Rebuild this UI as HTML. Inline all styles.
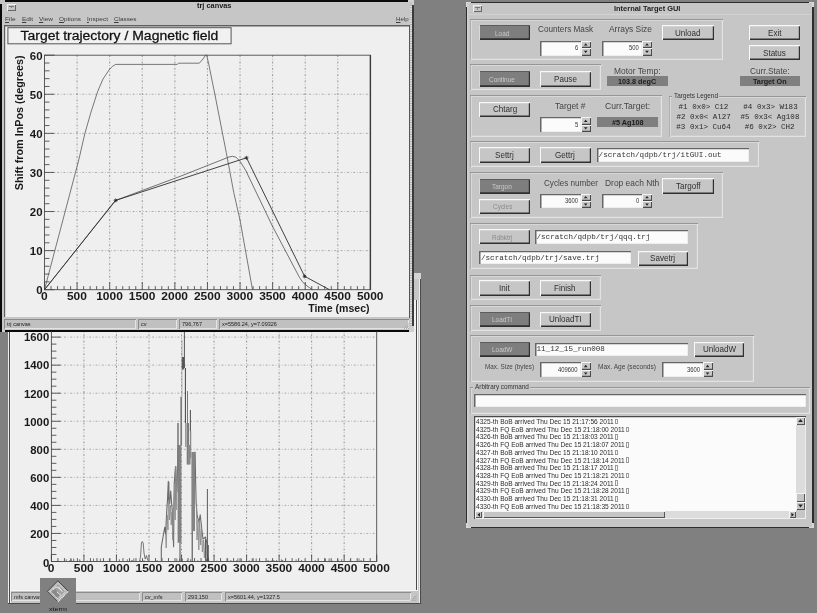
<!DOCTYPE html>
<html><head><meta charset="utf-8"><title>desktop</title>
<style>
html,body{margin:0;padding:0;background:#808080;}
#root{position:relative;width:817px;height:613px;overflow:hidden;background:#808080;font-family:"Liberation Sans",sans-serif;}
#wrap{left:-12px;top:-12px;width:841px;height:637px;background:#808080;filter:grayscale(1) blur(0.4px);}
#in{left:12px;top:12px;width:817px;height:613px;}
#root div,#root span,#root svg{position:absolute;}
#root span{white-space:nowrap;transform-origin:0 50%;line-height:1;}
#root svg{overflow:visible;pointer-events:none;}
u{text-decoration:underline;text-decoration-thickness:0.6px;text-underline-offset:0.5px;}
</style></head><body>
<div id="root"><div id="wrap"><div id="in">
<div style="left:7.50px;top:273.00px;width:413.50px;height:331.30px;background:#4a4a4a;"></div>
<div style="left:7.50px;top:273.00px;width:412.00px;height:330.00px;background:#eeeeee;"></div>
<div style="left:8.60px;top:274.00px;width:410.90px;height:329.00px;background:#c6c6c6;"></div>
<div style="left:8.90px;top:332.00px;width:1.10px;height:271.00px;background:#4a4a4a;"></div>
<div style="left:10.00px;top:332.00px;width:1.40px;height:271.00px;background:#f4f4f4;"></div>
<div style="left:414.20px;top:273.00px;width:6.80px;height:6.00px;background:#d4d4d4;"></div>
<div style="left:11.20px;top:300.00px;width:404.60px;height:289.80px;background:#efefef;"></div>
<div style="left:415.80px;top:300.00px;width:0.90px;height:290.50px;background:#4a4a4a;"></div>
<div style="left:416.70px;top:300.00px;width:1.50px;height:291.00px;background:#f6f6f6;"></div>
<div style="left:11.20px;top:589.80px;width:405.50px;height:0.80px;background:#f6f6f6;"></div>
<div style="left:11.30px;top:592.00px;width:128.50px;height:9.20px;background:#c0c0c0;box-shadow:inset 1px 1px 0 #8c8c8c, inset -1px -1px 0 #e4e4e4;"></div>
<span style="left:14.30px;top:593.97px;font:normal 6px/1 'Liberation Sans',sans-serif;color:#222;transform:scaleX(0.920);">mfs canvas</span>
<div style="left:142.40px;top:592.00px;width:40.10px;height:9.20px;background:#c0c0c0;box-shadow:inset 1px 1px 0 #8c8c8c, inset -1px -1px 0 #e4e4e4;"></div>
<span style="left:145.40px;top:593.97px;font:normal 6px/1 'Liberation Sans',sans-serif;color:#222;transform:scaleX(0.920);">cv_mfs</span>
<div style="left:185.00px;top:592.00px;width:37.00px;height:9.20px;background:#c0c0c0;box-shadow:inset 1px 1px 0 #8c8c8c, inset -1px -1px 0 #e4e4e4;"></div>
<span style="left:188.00px;top:593.97px;font:normal 6px/1 'Liberation Sans',sans-serif;color:#222;transform:scaleX(0.920);">293,150</span>
<div style="left:224.70px;top:592.00px;width:186.30px;height:9.20px;background:#c0c0c0;box-shadow:inset 1px 1px 0 #8c8c8c, inset -1px -1px 0 #e4e4e4;"></div>
<span style="left:227.70px;top:593.97px;font:normal 6px/1 'Liberation Sans',sans-serif;color:#222;transform:scaleX(0.920);">x=5601.44, y=1327.5</span>
<div style="left:-6.00px;top:-6.00px;width:420.20px;height:338.00px;background:#0a0a0a;"></div>
<div style="left:-6.00px;top:-6.00px;width:10.50px;height:10.20px;background:#c2c2c2;"></div>
<div style="left:408.20px;top:-6.00px;width:6.00px;height:11.00px;background:#d0d0d0;"></div>
<div style="left:2.40px;top:2.10px;width:409.90px;height:328.10px;background:#c6c6c6;"></div>
<div style="left:408.80px;top:25.00px;width:1.20px;height:293.00px;background:#555;"></div>
<div style="left:412.30px;top:5.00px;width:1.90px;height:321.00px;background:#3a3a3a;"></div>
<div style="left:408.60px;top:325.80px;width:5.60px;height:6.20px;background:#d0d0d0;"></div>
<div style="left:2.40px;top:330.20px;width:2.60px;height:1.80px;background:#d0d0d0;"></div>
<div style="left:410.40px;top:5.00px;width:1.90px;height:320.80px;background:#dcdcdc;background-image:linear-gradient(#aaa 50%, transparent 50%);background-size:2px 2.4px;"></div>
<span style="left:196.70px;top:3.08px;font:bold 6.6px/1 'Liberation Sans',sans-serif;color:#1a1a1a;transform:scaleX(1.119);">trj canvas</span>
<div style="left:7.00px;top:3.80px;width:8.60px;height:6.90px;background:#c6c6c6;box-shadow:inset 1px 1px 0 #f0f0f0, inset -1px -1px 0 #666;"></div>
<div style="left:9.00px;top:5.50px;width:4.60px;height:1.00px;background:#777;"></div>
<div style="left:10.80px;top:6.50px;width:0.90px;height:1.70px;background:#888;"></div>
<span style="left:5.00px;top:15.87px;font:normal 6.0px/1 'Liberation Sans',sans-serif;color:#3c3c3c;transform:scaleX(1.086);"><u>F</u>ile</span>
<span style="left:21.50px;top:15.87px;font:normal 6.0px/1 'Liberation Sans',sans-serif;color:#3c3c3c;transform:scaleX(1.064);"><u>E</u>dit</span>
<span style="left:39.00px;top:15.87px;font:normal 6.0px/1 'Liberation Sans',sans-serif;color:#3c3c3c;transform:scaleX(1.086);"><u>V</u>iew</span>
<span style="left:59.00px;top:15.87px;font:normal 6.0px/1 'Liberation Sans',sans-serif;color:#3c3c3c;transform:scaleX(1.064);"><u>O</u>ptions</span>
<span style="left:86.50px;top:15.87px;font:normal 6.0px/1 'Liberation Sans',sans-serif;color:#3c3c3c;transform:scaleX(1.086);"><u>I</u>nspect</span>
<span style="left:113.50px;top:15.87px;font:normal 6.0px/1 'Liberation Sans',sans-serif;color:#3c3c3c;transform:scaleX(1.054);"><u>C</u>lasses</span>
<span style="left:396.00px;top:15.87px;font:normal 6.0px/1 'Liberation Sans',sans-serif;color:#3c3c3c;transform:scaleX(1.029);"><u>H</u>elp</span>
<div style="left:3.60px;top:24.80px;width:405.20px;height:292.40px;background:#efefef;box-shadow:inset 1.2px 1.4px 0 #606060;"></div>
<div style="left:4.00px;top:319.30px;width:131.90px;height:9.40px;background:#c0c0c0;box-shadow:inset 1px 1px 0 #8c8c8c, inset -1px -1px 0 #e4e4e4;"></div>
<span style="left:7.00px;top:321.37px;font:normal 6px/1 'Liberation Sans',sans-serif;color:#222;transform:scaleX(0.920);">trj canvas</span>
<div style="left:138.00px;top:319.30px;width:39.00px;height:9.40px;background:#c0c0c0;box-shadow:inset 1px 1px 0 #8c8c8c, inset -1px -1px 0 #e4e4e4;"></div>
<span style="left:141.00px;top:321.37px;font:normal 6px/1 'Liberation Sans',sans-serif;color:#222;transform:scaleX(0.920);">cv</span>
<div style="left:178.80px;top:319.30px;width:37.90px;height:9.40px;background:#c0c0c0;box-shadow:inset 1px 1px 0 #8c8c8c, inset -1px -1px 0 #e4e4e4;"></div>
<span style="left:181.80px;top:321.37px;font:normal 6px/1 'Liberation Sans',sans-serif;color:#222;transform:scaleX(0.920);">796,767</span>
<div style="left:218.90px;top:319.30px;width:190.60px;height:9.40px;background:#c0c0c0;box-shadow:inset 1px 1px 0 #8c8c8c, inset -1px -1px 0 #e4e4e4;"></div>
<span style="left:221.90px;top:321.37px;font:normal 6px/1 'Liberation Sans',sans-serif;color:#222;transform:scaleX(0.920);">x=5586.24, y=7.09326</span>
<svg style="left:0;top:0" width="817" height="613"><path d="M404,329 L409.5,323.5 M406,329 L409.5,325.5 M408,329 L409.5,327.5" stroke="#777" stroke-width="0.7" stroke-dasharray="1 0.8"/><path d="M405,329 L409.5,324.5 M407,329 L409.5,326.5" stroke="#eee" stroke-width="0.7" stroke-dasharray="1 0.8"/><path d="M411,600.6 L416.5,595.1 M413,600.6 L416.5,597.1 M415,600.6 L416.5,599.1" stroke="#777" stroke-width="0.7" stroke-dasharray="1 0.8"/></svg>
<svg style="left:0;top:0" width="817" height="613" viewBox="0 0 817 613">
<rect x="7.9" y="27.7" width="223.2" height="16.1" fill="#f1f1f1" stroke="#555" stroke-width="1"/>
<text stroke="#111" stroke-width="0.25" transform="translate(20.50,39.60) scale(1.164,1)" text-anchor="start" font-family="Liberation Sans, sans-serif" font-weight="normal" font-size="12" fill="#111">Target trajectory / Magnetic field</text>
<path d="M77.09,55.2 V289.7" stroke="#696969" stroke-width="0.65" stroke-dasharray="2 1.8 0.7 1.8" fill="none"/>
<path d="M109.68,55.2 V289.7" stroke="#696969" stroke-width="0.65" stroke-dasharray="2 1.8 0.7 1.8" fill="none"/>
<path d="M142.27,55.2 V289.7" stroke="#696969" stroke-width="0.65" stroke-dasharray="2 1.8 0.7 1.8" fill="none"/>
<path d="M174.86,55.2 V289.7" stroke="#696969" stroke-width="0.65" stroke-dasharray="2 1.8 0.7 1.8" fill="none"/>
<path d="M207.45,55.2 V289.7" stroke="#696969" stroke-width="0.65" stroke-dasharray="2 1.8 0.7 1.8" fill="none"/>
<path d="M240.04,55.2 V289.7" stroke="#696969" stroke-width="0.65" stroke-dasharray="2 1.8 0.7 1.8" fill="none"/>
<path d="M272.63,55.2 V289.7" stroke="#696969" stroke-width="0.65" stroke-dasharray="2 1.8 0.7 1.8" fill="none"/>
<path d="M305.22,55.2 V289.7" stroke="#696969" stroke-width="0.65" stroke-dasharray="2 1.8 0.7 1.8" fill="none"/>
<path d="M337.81,55.2 V289.7" stroke="#696969" stroke-width="0.65" stroke-dasharray="2 1.8 0.7 1.8" fill="none"/>
<path d="M44.5,250.62 H370.4" stroke="#7d7d7d" stroke-width="0.6" stroke-dasharray="2 1.8 0.7 1.8" fill="none"/>
<path d="M44.5,211.53 H370.4" stroke="#7d7d7d" stroke-width="0.6" stroke-dasharray="2 1.8 0.7 1.8" fill="none"/>
<path d="M44.5,172.45 H370.4" stroke="#7d7d7d" stroke-width="0.6" stroke-dasharray="2 1.8 0.7 1.8" fill="none"/>
<path d="M44.5,133.37 H370.4" stroke="#7d7d7d" stroke-width="0.6" stroke-dasharray="2 1.8 0.7 1.8" fill="none"/>
<path d="M44.5,94.28 H370.4" stroke="#7d7d7d" stroke-width="0.6" stroke-dasharray="2 1.8 0.7 1.8" fill="none"/>
<rect x="44.5" y="55.2" width="325.9" height="234.5" stroke="#4c4c4c" stroke-width="0.9" fill="none"/>
<path d="M370.4,55.2 V289.7" stroke="#3c3c3c" stroke-width="1.4"/>
<path d="M44.50,289.7 v-7.5 M51.02,289.7 v-3.6 M57.54,289.7 v-3.6 M64.05,289.7 v-3.6 M70.57,289.7 v-3.6 M77.09,289.7 v-7.5 M83.61,289.7 v-3.6 M90.13,289.7 v-3.6 M96.64,289.7 v-3.6 M103.16,289.7 v-3.6 M109.68,289.7 v-7.5 M116.20,289.7 v-3.6 M122.72,289.7 v-3.6 M129.23,289.7 v-3.6 M135.75,289.7 v-3.6 M142.27,289.7 v-7.5 M148.79,289.7 v-3.6 M155.31,289.7 v-3.6 M161.82,289.7 v-3.6 M168.34,289.7 v-3.6 M174.86,289.7 v-7.5 M181.38,289.7 v-3.6 M187.90,289.7 v-3.6 M194.41,289.7 v-3.6 M200.93,289.7 v-3.6 M207.45,289.7 v-7.5 M213.97,289.7 v-3.6 M220.49,289.7 v-3.6 M227.00,289.7 v-3.6 M233.52,289.7 v-3.6 M240.04,289.7 v-7.5 M246.56,289.7 v-3.6 M253.08,289.7 v-3.6 M259.59,289.7 v-3.6 M266.11,289.7 v-3.6 M272.63,289.7 v-7.5 M279.15,289.7 v-3.6 M285.67,289.7 v-3.6 M292.18,289.7 v-3.6 M298.70,289.7 v-3.6 M305.22,289.7 v-7.5 M311.74,289.7 v-3.6 M318.26,289.7 v-3.6 M324.77,289.7 v-3.6 M331.29,289.7 v-3.6 M337.81,289.7 v-7.5 M344.33,289.7 v-3.6 M350.85,289.7 v-3.6 M357.36,289.7 v-3.6 M363.88,289.7 v-3.6 M370.40,289.7 v-7.5" stroke="#444" stroke-width="0.85"/>
<path d="M44.5,289.70 h10 M44.5,281.88 h5 M44.5,274.07 h5 M44.5,266.25 h5 M44.5,258.43 h5 M44.5,250.62 h10 M44.5,242.80 h5 M44.5,234.98 h5 M44.5,227.17 h5 M44.5,219.35 h5 M44.5,211.53 h10 M44.5,203.72 h5 M44.5,195.90 h5 M44.5,188.08 h5 M44.5,180.27 h5 M44.5,172.45 h10 M44.5,164.63 h5 M44.5,156.82 h5 M44.5,149.00 h5 M44.5,141.18 h5 M44.5,133.37 h10 M44.5,125.55 h5 M44.5,117.73 h5 M44.5,109.92 h5 M44.5,102.10 h5 M44.5,94.28 h10 M44.5,86.47 h5 M44.5,78.65 h5 M44.5,70.83 h5 M44.5,63.02 h5 M44.5,55.20 h10" stroke="#444" stroke-width="0.85"/>
<text transform="translate(44.30,299.70) scale(1.130,1)" text-anchor="middle" font-family="Liberation Sans, sans-serif" font-weight="bold" font-size="10.6" fill="#1a1a1a">0</text>
<text transform="translate(76.89,299.70) scale(1.130,1)" text-anchor="middle" font-family="Liberation Sans, sans-serif" font-weight="bold" font-size="10.6" fill="#1a1a1a">500</text>
<text transform="translate(109.48,299.70) scale(1.130,1)" text-anchor="middle" font-family="Liberation Sans, sans-serif" font-weight="bold" font-size="10.6" fill="#1a1a1a">1000</text>
<text transform="translate(142.07,299.70) scale(1.130,1)" text-anchor="middle" font-family="Liberation Sans, sans-serif" font-weight="bold" font-size="10.6" fill="#1a1a1a">1500</text>
<text transform="translate(174.66,299.70) scale(1.130,1)" text-anchor="middle" font-family="Liberation Sans, sans-serif" font-weight="bold" font-size="10.6" fill="#1a1a1a">2000</text>
<text transform="translate(207.25,299.70) scale(1.130,1)" text-anchor="middle" font-family="Liberation Sans, sans-serif" font-weight="bold" font-size="10.6" fill="#1a1a1a">2500</text>
<text transform="translate(239.84,299.70) scale(1.130,1)" text-anchor="middle" font-family="Liberation Sans, sans-serif" font-weight="bold" font-size="10.6" fill="#1a1a1a">3000</text>
<text transform="translate(272.43,299.70) scale(1.130,1)" text-anchor="middle" font-family="Liberation Sans, sans-serif" font-weight="bold" font-size="10.6" fill="#1a1a1a">3500</text>
<text transform="translate(305.02,299.70) scale(1.130,1)" text-anchor="middle" font-family="Liberation Sans, sans-serif" font-weight="bold" font-size="10.6" fill="#1a1a1a">4000</text>
<text transform="translate(337.61,299.70) scale(1.130,1)" text-anchor="middle" font-family="Liberation Sans, sans-serif" font-weight="bold" font-size="10.6" fill="#1a1a1a">4500</text>
<text transform="translate(370.20,299.70) scale(1.130,1)" text-anchor="middle" font-family="Liberation Sans, sans-serif" font-weight="bold" font-size="10.6" fill="#1a1a1a">5000</text>
<text transform="translate(42.60,294.00) scale(1.080,1)" text-anchor="end" font-family="Liberation Sans, sans-serif" font-weight="bold" font-size="10.6" fill="#1a1a1a">0</text>
<text transform="translate(42.60,254.92) scale(1.080,1)" text-anchor="end" font-family="Liberation Sans, sans-serif" font-weight="bold" font-size="10.6" fill="#1a1a1a">10</text>
<text transform="translate(42.60,215.83) scale(1.080,1)" text-anchor="end" font-family="Liberation Sans, sans-serif" font-weight="bold" font-size="10.6" fill="#1a1a1a">20</text>
<text transform="translate(42.60,176.75) scale(1.080,1)" text-anchor="end" font-family="Liberation Sans, sans-serif" font-weight="bold" font-size="10.6" fill="#1a1a1a">30</text>
<text transform="translate(42.60,137.67) scale(1.080,1)" text-anchor="end" font-family="Liberation Sans, sans-serif" font-weight="bold" font-size="10.6" fill="#1a1a1a">40</text>
<text transform="translate(42.60,98.58) scale(1.080,1)" text-anchor="end" font-family="Liberation Sans, sans-serif" font-weight="bold" font-size="10.6" fill="#1a1a1a">50</text>
<text transform="translate(42.60,60.20) scale(1.080,1)" text-anchor="end" font-family="Liberation Sans, sans-serif" font-weight="bold" font-size="10.6" fill="#1a1a1a">60</text>
<text transform="translate(369.60,311.80) scale(0.997,1)" text-anchor="end" font-family="Liberation Sans, sans-serif" font-weight="bold" font-size="10.6" fill="#1a1a1a">Time (msec)</text>
<text transform="translate(23.20,55.40) rotate(-90) scale(1.019,1)" text-anchor="end" font-family="Liberation Sans, sans-serif" font-weight="bold" font-size="10.6" fill="#1a1a1a">Shift from InPos (degrees)</text>
<polyline points="44.50,289.70 78.75,160.00 84.80,133.80 91.00,112.00 97.70,91.40 103.00,79.00 109.30,69.60 112.50,66.30 115.70,64.40 177.40,64.40 178.50,63.20 199.30,63.20 203.00,59.00 205.60,55.00 206.60,55.00 208.50,63.00 215.00,95.00 226.25,152.50 233.75,192.50 240.00,220.00 252.50,289.70" stroke="#585858" stroke-width="0.8" fill="none" stroke-linejoin="round"/>
<polyline points="44.50,289.70 112.00,204.60 114.50,201.60 117.00,199.90 180.00,176.40 229.00,157.00 232.50,156.30 236.00,157.20 240.00,161.30 245.50,170.00 272.50,226.30 299.50,277.50 303.00,282.50 307.00,286.00 312.50,289.70" stroke="#484848" stroke-width="0.75" fill="none" stroke-linejoin="round"/>
<polyline points="44.50,289.70 115.70,200.40 246.50,157.80 304.60,276.30 329.50,289.70" stroke="#2e2e2e" stroke-width="0.9" fill="none"/>
<path d="M113.7,200.4 h4 M115.7,198.4 v4 M114.3,199.0 l2.8,2.8 M114.3,201.8 l2.8,-2.8" stroke="#222" stroke-width="0.7"/>
<path d="M244.5,157.8 h4 M246.5,155.8 v4 M245.1,156.4 l2.8,2.8 M245.1,159.20000000000002 l2.8,-2.8" stroke="#222" stroke-width="0.7"/>
<path d="M302.6,276.3 h4 M304.6,274.3 v4 M303.20000000000005,274.90000000000003 l2.8,2.8 M303.20000000000005,277.7 l2.8,-2.8" stroke="#222" stroke-width="0.7"/>
<clipPath id="c2"><rect x="10" y="331.5" width="407" height="260"/></clipPath>
<g clip-path="url(#c2)">
<path d="M83.93,328.0 V561.5" stroke="#696969" stroke-width="0.65" stroke-dasharray="2 1.8 0.7 1.8" fill="none"/>
<path d="M116.46,328.0 V561.5" stroke="#696969" stroke-width="0.65" stroke-dasharray="2 1.8 0.7 1.8" fill="none"/>
<path d="M148.99,328.0 V561.5" stroke="#696969" stroke-width="0.65" stroke-dasharray="2 1.8 0.7 1.8" fill="none"/>
<path d="M181.52,328.0 V561.5" stroke="#696969" stroke-width="0.65" stroke-dasharray="2 1.8 0.7 1.8" fill="none"/>
<path d="M214.05,328.0 V561.5" stroke="#696969" stroke-width="0.65" stroke-dasharray="2 1.8 0.7 1.8" fill="none"/>
<path d="M246.58,328.0 V561.5" stroke="#696969" stroke-width="0.65" stroke-dasharray="2 1.8 0.7 1.8" fill="none"/>
<path d="M279.11,328.0 V561.5" stroke="#696969" stroke-width="0.65" stroke-dasharray="2 1.8 0.7 1.8" fill="none"/>
<path d="M311.64,328.0 V561.5" stroke="#696969" stroke-width="0.65" stroke-dasharray="2 1.8 0.7 1.8" fill="none"/>
<path d="M344.17,328.0 V561.5" stroke="#696969" stroke-width="0.65" stroke-dasharray="2 1.8 0.7 1.8" fill="none"/>
<path d="M51.4,533.45 H376.7" stroke="#7d7d7d" stroke-width="0.6" stroke-dasharray="2 1.8 0.7 1.8" fill="none"/>
<path d="M51.4,505.40 H376.7" stroke="#7d7d7d" stroke-width="0.6" stroke-dasharray="2 1.8 0.7 1.8" fill="none"/>
<path d="M51.4,477.35 H376.7" stroke="#7d7d7d" stroke-width="0.6" stroke-dasharray="2 1.8 0.7 1.8" fill="none"/>
<path d="M51.4,449.30 H376.7" stroke="#7d7d7d" stroke-width="0.6" stroke-dasharray="2 1.8 0.7 1.8" fill="none"/>
<path d="M51.4,421.25 H376.7" stroke="#7d7d7d" stroke-width="0.6" stroke-dasharray="2 1.8 0.7 1.8" fill="none"/>
<path d="M51.4,393.20 H376.7" stroke="#7d7d7d" stroke-width="0.6" stroke-dasharray="2 1.8 0.7 1.8" fill="none"/>
<path d="M51.4,365.15 H376.7" stroke="#7d7d7d" stroke-width="0.6" stroke-dasharray="2 1.8 0.7 1.8" fill="none"/>
<path d="M51.4,337.10 H376.7" stroke="#7d7d7d" stroke-width="0.6" stroke-dasharray="2 1.8 0.7 1.8" fill="none"/>
<rect x="51.4" y="328.0" width="325.3" height="233.5" stroke="#4c4c4c" stroke-width="0.9" fill="none"/>
<path d="M51.40,561.5 v-7 M57.91,561.5 v-3.4 M64.41,561.5 v-3.4 M70.92,561.5 v-3.4 M77.42,561.5 v-3.4 M83.93,561.5 v-7 M90.44,561.5 v-3.4 M96.94,561.5 v-3.4 M103.45,561.5 v-3.4 M109.95,561.5 v-3.4 M116.46,561.5 v-7 M122.97,561.5 v-3.4 M129.47,561.5 v-3.4 M135.98,561.5 v-3.4 M142.48,561.5 v-3.4 M148.99,561.5 v-7 M155.50,561.5 v-3.4 M162.00,561.5 v-3.4 M168.51,561.5 v-3.4 M175.01,561.5 v-3.4 M181.52,561.5 v-7 M188.03,561.5 v-3.4 M194.53,561.5 v-3.4 M201.04,561.5 v-3.4 M207.54,561.5 v-3.4 M214.05,561.5 v-7 M220.56,561.5 v-3.4 M227.06,561.5 v-3.4 M233.57,561.5 v-3.4 M240.07,561.5 v-3.4 M246.58,561.5 v-7 M253.09,561.5 v-3.4 M259.59,561.5 v-3.4 M266.10,561.5 v-3.4 M272.60,561.5 v-3.4 M279.11,561.5 v-7 M285.62,561.5 v-3.4 M292.12,561.5 v-3.4 M298.63,561.5 v-3.4 M305.13,561.5 v-3.4 M311.64,561.5 v-7 M318.15,561.5 v-3.4 M324.65,561.5 v-3.4 M331.16,561.5 v-3.4 M337.66,561.5 v-3.4 M344.17,561.5 v-7 M350.68,561.5 v-3.4 M357.18,561.5 v-3.4 M363.69,561.5 v-3.4 M370.19,561.5 v-3.4 M376.70,561.5 v-7" stroke="#444" stroke-width="0.85"/>
<path d="M51.4,561.50 h9.5 M51.4,554.49 h5 M51.4,547.48 h5 M51.4,540.46 h5 M51.4,533.45 h9.5 M51.4,526.44 h5 M51.4,519.42 h5 M51.4,512.41 h5 M51.4,505.40 h9.5 M51.4,498.39 h5 M51.4,491.38 h5 M51.4,484.36 h5 M51.4,477.35 h9.5 M51.4,470.34 h5 M51.4,463.32 h5 M51.4,456.31 h5 M51.4,449.30 h9.5 M51.4,442.29 h5 M51.4,435.27 h5 M51.4,428.26 h5 M51.4,421.25 h9.5 M51.4,414.24 h5 M51.4,407.23 h5 M51.4,400.21 h5 M51.4,393.20 h9.5 M51.4,386.19 h5 M51.4,379.18 h5 M51.4,372.16 h5 M51.4,365.15 h9.5 M51.4,358.14 h5 M51.4,351.12 h5 M51.4,344.11 h5 M51.4,337.10 h9.5 M51.4,330.09 h5" stroke="#444" stroke-width="0.85"/>
<text transform="translate(51.20,572.30) scale(1.130,1)" text-anchor="middle" font-family="Liberation Sans, sans-serif" font-weight="bold" font-size="10.6" fill="#1a1a1a">0</text>
<text transform="translate(83.73,572.30) scale(1.130,1)" text-anchor="middle" font-family="Liberation Sans, sans-serif" font-weight="bold" font-size="10.6" fill="#1a1a1a">500</text>
<text transform="translate(116.26,572.30) scale(1.130,1)" text-anchor="middle" font-family="Liberation Sans, sans-serif" font-weight="bold" font-size="10.6" fill="#1a1a1a">1000</text>
<text transform="translate(148.79,572.30) scale(1.130,1)" text-anchor="middle" font-family="Liberation Sans, sans-serif" font-weight="bold" font-size="10.6" fill="#1a1a1a">1500</text>
<text transform="translate(181.32,572.30) scale(1.130,1)" text-anchor="middle" font-family="Liberation Sans, sans-serif" font-weight="bold" font-size="10.6" fill="#1a1a1a">2000</text>
<text transform="translate(213.85,572.30) scale(1.130,1)" text-anchor="middle" font-family="Liberation Sans, sans-serif" font-weight="bold" font-size="10.6" fill="#1a1a1a">2500</text>
<text transform="translate(246.38,572.30) scale(1.130,1)" text-anchor="middle" font-family="Liberation Sans, sans-serif" font-weight="bold" font-size="10.6" fill="#1a1a1a">3000</text>
<text transform="translate(278.91,572.30) scale(1.130,1)" text-anchor="middle" font-family="Liberation Sans, sans-serif" font-weight="bold" font-size="10.6" fill="#1a1a1a">3500</text>
<text transform="translate(311.44,572.30) scale(1.130,1)" text-anchor="middle" font-family="Liberation Sans, sans-serif" font-weight="bold" font-size="10.6" fill="#1a1a1a">4000</text>
<text transform="translate(343.97,572.30) scale(1.130,1)" text-anchor="middle" font-family="Liberation Sans, sans-serif" font-weight="bold" font-size="10.6" fill="#1a1a1a">4500</text>
<text transform="translate(376.50,572.30) scale(1.130,1)" text-anchor="middle" font-family="Liberation Sans, sans-serif" font-weight="bold" font-size="10.6" fill="#1a1a1a">5000</text>
<text transform="translate(49.20,566.80) scale(1.070,1)" text-anchor="end" font-family="Liberation Sans, sans-serif" font-weight="bold" font-size="10.6" fill="#1a1a1a">0</text>
<text transform="translate(49.20,537.75) scale(1.070,1)" text-anchor="end" font-family="Liberation Sans, sans-serif" font-weight="bold" font-size="10.6" fill="#1a1a1a">200</text>
<text transform="translate(49.20,509.70) scale(1.070,1)" text-anchor="end" font-family="Liberation Sans, sans-serif" font-weight="bold" font-size="10.6" fill="#1a1a1a">400</text>
<text transform="translate(49.20,481.65) scale(1.070,1)" text-anchor="end" font-family="Liberation Sans, sans-serif" font-weight="bold" font-size="10.6" fill="#1a1a1a">600</text>
<text transform="translate(49.20,453.60) scale(1.070,1)" text-anchor="end" font-family="Liberation Sans, sans-serif" font-weight="bold" font-size="10.6" fill="#1a1a1a">800</text>
<text transform="translate(49.20,425.55) scale(1.070,1)" text-anchor="end" font-family="Liberation Sans, sans-serif" font-weight="bold" font-size="10.6" fill="#1a1a1a">1000</text>
<text transform="translate(49.20,397.50) scale(1.070,1)" text-anchor="end" font-family="Liberation Sans, sans-serif" font-weight="bold" font-size="10.6" fill="#1a1a1a">1200</text>
<text transform="translate(49.20,369.45) scale(1.070,1)" text-anchor="end" font-family="Liberation Sans, sans-serif" font-weight="bold" font-size="10.6" fill="#1a1a1a">1400</text>
<text transform="translate(49.20,341.40) scale(1.070,1)" text-anchor="end" font-family="Liberation Sans, sans-serif" font-weight="bold" font-size="10.6" fill="#1a1a1a">1600</text>
<polyline points="139.50,561.50 140.60,556.00 141.40,543.00 142.30,541.50 143.20,543.00 144.00,553.00 145.20,559.00 146.50,555.50 147.60,560.00 149.00,561.50" stroke="#666" stroke-width="0.9" fill="none"/>
<polyline points="161.30,561.50 161.30,546.80 163.00,537.00 164.80,527.20 165.60,534.00 166.70,511.50 167.50,500.00 168.30,481.20 169.00,500.00 169.70,503.70 170.20,496.00 170.70,491.00 171.50,502.00 172.20,509.60 173.00,530.00 173.60,546.80 173.90,510.00 174.20,484.10 174.90,474.00 175.50,466.50 176.20,480.00 176.90,492.00 177.50,470.00 178.10,445.00" stroke="#6a6a6a" stroke-width="1.1" fill="none" stroke-linejoin="round"/>
<polyline points="165.60,534.00 166.20,548.00 167.20,515.00 168.00,530.00 168.80,482.00 169.40,520.00 170.40,505.00 171.20,525.00 172.00,512.00 172.80,540.00 174.60,490.00 175.20,520.00 176.00,475.00 176.60,510.00" stroke="#8c8c8c" stroke-width="0.9" fill="none" stroke-linejoin="round"/>
<polyline points="195.10,451.80 195.60,480.00 196.10,501.80 197.10,515.00 198.00,519.00 199.00,522.00 200.20,514.80 201.00,522.00 202.00,531.00 203.00,539.00 204.30,538.00 205.50,537.00 206.30,541.00 206.90,543.00 207.20,555.00 208.80,561.50" stroke="#6a6a6a" stroke-width="1.1" fill="none" stroke-linejoin="round"/>
<polyline points="196.40,505.00 197.00,540.00 198.00,520.00 198.80,550.00 199.60,522.00 200.60,545.00 201.40,527.00 202.40,552.00 203.40,540.00 204.40,558.00 205.40,540.00 206.20,561.00" stroke="#8c8c8c" stroke-width="0.9" fill="none" stroke-linejoin="round"/>
<path d="M182.0,339.7 V396.7" stroke="#9a9a9a" stroke-width="0.7"/>
<path d="M183.0,357 V369.5" stroke="#5a5a5a" stroke-width="2.2"/>
<path d="M181.2,396.7 V445" stroke="#7a7a7a" stroke-width="1.7"/>
<path d="M179.5,445 V542.8" stroke="#828282" stroke-width="3.8"/>
<path d="M180.0,542.8 V561.5" stroke="#3a3a3a" stroke-width="0.9"/>
<path d="M178.0,423 V470" stroke="#7c7c7c" stroke-width="1.6"/>
<path d="M175.8,466 V500" stroke="#888" stroke-width="1.4"/>
<path d="M187.5,391 V423" stroke="#5a5a5a" stroke-width="0.8"/>
<path d="M187.9,423 V464.5" stroke="#7c7c7c" stroke-width="2.4"/>
<path d="M189.3,445 V464.6" stroke="#8a8a8a" stroke-width="2.6"/>
<path d="M190.4,410 V431" stroke="#3a3a3a" stroke-width="0.9"/>
<path d="M190.6,431 V458" stroke="#8a8a8a" stroke-width="1.3"/>
<path d="M193.2,452 V531" stroke="#848484" stroke-width="3.6"/>
<path d="M192.2,531 V561.5" stroke="#2e2e2e" stroke-width="0.9"/>
<path d="M207.4,489 V561.5" stroke="#4a4a4a" stroke-width="0.9"/>
<path d="M205.6,539 V561.5" stroke="#444" stroke-width="0.8"/>
<path d="M208.4,545 V561.5" stroke="#444" stroke-width="0.8"/>
<path d="M184.4,331.5 V368" stroke="#2c2c2c" stroke-width="0.8"/>
<path d="M185.4,368 V423" stroke="#2c2c2c" stroke-width="0.9"/>
<path d="M185.8,423 V447" stroke="#666" stroke-width="0.9"/>
<path d="M168.6,482 V500" stroke="#6a6a6a" stroke-width="0.9"/>
<path d="M133.8,561.5 v-3 M100.4,561.5 v-3 M207.0,561.5 v-3 M80.3,561.5 v-0.8 M341.7,561.5 v-2.2 M140.4,561.5 v-1.2 M119.4,561.5 v-2.2 M227.7,561.5 v-3 M207.7,561.5 v-1.2 M131.9,561.5 v-1.2 M329.1,561.5 v-3 M180.9,561.5 v-0.8 M268.1,561.5 v-0.8 M109.4,561.5 v-3 M73.3,561.5 v-0.8 M315.3,561.5 v-1.5 M206.6,561.5 v-2.2 M281.4,561.5 v-2.2 M182.4,561.5 v-3 M197.8,561.5 v-1.2 M332.4,561.5 v-0.8 M71.1,561.5 v-2.2 M127.3,561.5 v-2.2 M301.5,561.5 v-1.5 M190.6,561.5 v-2.2 M237.9,561.5 v-3 M241.4,561.5 v-3 M132.0,561.5 v-1.5 M271.4,561.5 v-0.8 M325.5,561.5 v-3 M268.1,561.5 v-1.2 M276.6,561.5 v-1.5 M359.0,561.5 v-3 M236.4,561.5 v-1.2 M256.2,561.5 v-3 M142.8,561.5 v-0.8 M79.7,561.5 v-2.2 M87.4,561.5 v-0.8 M187.2,561.5 v-1.2 M66.2,561.5 v-2.2 M298.3,561.5 v-0.8 M73.7,561.5 v-3 M296.1,561.5 v-2.2 M282.7,561.5 v-1.5 M230.8,561.5 v-1.5 M216.7,561.5 v-0.8 M156.0,561.5 v-0.8 M93.5,561.5 v-3 M69.7,561.5 v-1.2 M361.1,561.5 v-1.5 M249.2,561.5 v-1.2 M273.8,561.5 v-1.5 M157.3,561.5 v-1.2 M338.0,561.5 v-2.2 M176.8,561.5 v-3 M179.7,561.5 v-3 M271.1,561.5 v-0.8 M252.2,561.5 v-3 M144.1,561.5 v-1.2 M350.3,561.5 v-2.2" stroke="#555" stroke-width="0.8"/>
</g>
</svg>
<div style="left:465.90px;top:1.70px;width:347.90px;height:526.20px;background:#2e2e2e;"></div>
<div style="left:467.40px;top:3.00px;width:344.60px;height:523.80px;background:#c6c6c6;box-shadow:inset 1.5px 0 0 #d4d4d4;"></div>
<div style="left:465.90px;top:1.70px;width:5.00px;height:5.00px;background:#d8d8d8;"></div>
<div style="left:808.60px;top:1.70px;width:5.00px;height:5.00px;background:#d8d8d8;"></div>
<div style="left:465.90px;top:522.90px;width:5.00px;height:5.00px;background:#d8d8d8;"></div>
<div style="left:808.60px;top:522.90px;width:5.00px;height:5.00px;background:#d8d8d8;"></div>
<div style="left:467.40px;top:3.00px;width:344.60px;height:523.80px;background:#c6c6c6;box-shadow:inset 1.5px 0 0 #d2d2d2;"></div>
<div style="left:469.00px;top:14.30px;width:342.00px;height:1.00px;background:#d2d2d2;"></div>
<div style="left:472.90px;top:5.00px;width:8.80px;height:7.10px;background:#c6c6c6;box-shadow:inset 1px 1px 0 #f0f0f0, inset -1px -1px 0 #666;"></div>
<div style="left:475.00px;top:6.70px;width:4.60px;height:0.90px;background:#777;"></div>
<div style="left:476.60px;top:7.60px;width:1.00px;height:2.00px;background:#888;"></div>
<span style="left:613.50px;top:4.89px;font:bold 7.6px/1 'Liberation Sans',sans-serif;color:#1e1e1e;transform:scaleX(0.980);">Internal Target GUI</span>
<div style="left:470.00px;top:18.70px;width:253.00px;height:41.50px;box-shadow:inset 0 1px 0 #969696, inset 1px 0 0 #b0b0b0, inset -1.2px -1.2px 0 #e2e2e2;"></div>
<div style="left:471.00px;top:19.70px;width:253.00px;height:41.50px;box-shadow:inset 1px 1px 0 #d8d8d8;"></div>
<div style="left:479.40px;top:25.30px;width:50.60px;height:15.20px;background:#7e7e7e;box-shadow:inset 1px 0 0 #d8d8d8, inset 0 1px 0 #5c5c5c, inset -1.2px -1.8px 0 #303030;"></div>
<span style="left:495.01px;top:29.69px;font:normal 7.6000000000000005px/1 'Liberation Sans',sans-serif;color:#c9c9c9;transform:scaleX(0.850);">Load</span>
<span style="left:537.50px;top:25.26px;font:normal 9.3px/1 'Liberation Sans',sans-serif;color:#454545;transform:scaleX(0.881);">Counters Mask</span>
<div style="left:540.40px;top:40.70px;width:40.50px;height:14.90px;background:#fbfbfb;box-shadow:inset 1.5px 1.2px 0 #666, inset -1px -1px 0 #eeeeee;"></div>
<span style="left:574.65px;top:44.97px;font:normal 6.5px/1 'Liberation Sans',sans-serif;color:#333;transform:scaleX(0.900);">6</span>
<div style="left:580.90px;top:40.70px;width:9.90px;height:7.45px;background:#c6c6c6;box-shadow:inset 1px 1px 0 #f4f4f4, inset -1px -1.2px 0 #4a4a4a;"></div>
<svg style="left:0;top:0" width="817" height="613"><polygon points="583.9,45.425000000000004 587.4999999999999,45.425000000000004 585.6999999999999,43.12500000000001" fill="#222"/></svg>
<div style="left:580.90px;top:48.15px;width:9.90px;height:7.45px;background:#c6c6c6;box-shadow:inset 1px 1px 0 #f4f4f4, inset -1px -1.2px 0 #4a4a4a;"></div>
<svg style="left:0;top:0" width="817" height="613"><polygon points="583.9,50.675 587.4999999999999,50.675 585.6999999999999,52.975" fill="#222"/></svg>
<span style="left:608.50px;top:25.26px;font:normal 9.3px/1 'Liberation Sans',sans-serif;color:#454545;transform:scaleX(0.904);">Arrays Size</span>
<div style="left:602.00px;top:40.70px;width:40.20px;height:14.90px;background:#fbfbfb;box-shadow:inset 1.5px 1.2px 0 #666, inset -1px -1px 0 #eeeeee;"></div>
<span style="left:629.44px;top:44.97px;font:normal 6.5px/1 'Liberation Sans',sans-serif;color:#333;transform:scaleX(0.900);">500</span>
<div style="left:642.20px;top:40.70px;width:9.90px;height:7.45px;background:#c6c6c6;box-shadow:inset 1px 1px 0 #f4f4f4, inset -1px -1.2px 0 #4a4a4a;"></div>
<svg style="left:0;top:0" width="817" height="613"><polygon points="645.2,45.425000000000004 648.8,45.425000000000004 647.0,43.12500000000001" fill="#222"/></svg>
<div style="left:642.20px;top:48.15px;width:9.90px;height:7.45px;background:#c6c6c6;box-shadow:inset 1px 1px 0 #f4f4f4, inset -1px -1.2px 0 #4a4a4a;"></div>
<svg style="left:0;top:0" width="817" height="613"><polygon points="645.2,50.675 648.8,50.675 647.0,52.975" fill="#222"/></svg>
<div style="left:662.30px;top:25.30px;width:51.40px;height:15.20px;background:#c6c6c6;box-shadow:inset 1px 1.3px 0 #f8f8f8, inset -1.2px -1.5px 0 #303030;"></div>
<span style="left:675.21px;top:27.86px;font:normal 9.5px/1 'Liberation Sans',sans-serif;color:#303030;transform:scaleX(0.850);">Unload</span>
<div style="left:749.30px;top:25.30px;width:51.10px;height:15.20px;background:#c6c6c6;box-shadow:inset 1px 1.3px 0 #f8f8f8, inset -1.2px -1.5px 0 #303030;"></div>
<span style="left:768.12px;top:27.86px;font:normal 9.5px/1 'Liberation Sans',sans-serif;color:#303030;transform:scaleX(0.850);">Exit</span>
<div style="left:749.30px;top:45.20px;width:51.10px;height:15.30px;background:#c6c6c6;box-shadow:inset 1px 1.3px 0 #f8f8f8, inset -1.2px -1.5px 0 #303030;"></div>
<span style="left:763.40px;top:47.81px;font:normal 9.5px/1 'Liberation Sans',sans-serif;color:#303030;transform:scaleX(0.850);">Status</span>
<div style="left:470.00px;top:63.90px;width:130.50px;height:26.40px;box-shadow:inset 0 1px 0 #969696, inset 1px 0 0 #b0b0b0, inset -1.2px -1.2px 0 #e2e2e2;"></div>
<div style="left:471.00px;top:64.90px;width:130.50px;height:26.40px;box-shadow:inset 1px 1px 0 #d8d8d8;"></div>
<div style="left:479.40px;top:71.00px;width:50.60px;height:15.50px;background:#7e7e7e;box-shadow:inset 1px 0 0 #d8d8d8, inset 0 1px 0 #5c5c5c, inset -1.2px -1.8px 0 #303030;"></div>
<span style="left:489.27px;top:75.54px;font:normal 7.6000000000000005px/1 'Liberation Sans',sans-serif;color:#c9c9c9;transform:scaleX(0.850);">Continue</span>
<div style="left:539.70px;top:71.00px;width:51.10px;height:15.50px;background:#c6c6c6;box-shadow:inset 1px 1.3px 0 #f8f8f8, inset -1.2px -1.5px 0 #303030;"></div>
<span style="left:553.80px;top:73.71px;font:normal 9.5px/1 'Liberation Sans',sans-serif;color:#303030;transform:scaleX(0.850);">Pause</span>
<span style="left:613.50px;top:66.66px;font:normal 9.3px/1 'Liberation Sans',sans-serif;color:#454545;transform:scaleX(0.903);">Motor Temp:</span>
<div style="left:606.50px;top:76.40px;width:61.30px;height:9.60px;background:#7f7f7f;"></div>
<span style="left:618.14px;top:77.69px;font:bold 7.6px/1 'Liberation Sans',sans-serif;color:#1c1c1c;transform:scaleX(0.950);">103.8 degC</span>
<span style="left:750.40px;top:66.66px;font:normal 9.3px/1 'Liberation Sans',sans-serif;color:#454545;transform:scaleX(0.891);">Curr.State:</span>
<div style="left:739.60px;top:76.40px;width:60.40px;height:9.60px;background:#7f7f7f;"></div>
<span style="left:753.02px;top:77.69px;font:bold 7.6px/1 'Liberation Sans',sans-serif;color:#1c1c1c;transform:scaleX(0.950);">Target On</span>
<div style="left:470.00px;top:95.00px;width:191.70px;height:41.60px;box-shadow:inset 0 1px 0 #969696, inset 1px 0 0 #b0b0b0, inset -1.2px -1.2px 0 #e2e2e2;"></div>
<div style="left:471.00px;top:96.00px;width:191.70px;height:41.60px;box-shadow:inset 1px 1px 0 #d8d8d8;"></div>
<div style="left:479.40px;top:101.50px;width:50.60px;height:15.30px;background:#c6c6c6;box-shadow:inset 1px 1.3px 0 #f8f8f8, inset -1.2px -1.5px 0 #303030;"></div>
<span style="left:492.58px;top:104.11px;font:normal 9.5px/1 'Liberation Sans',sans-serif;color:#303030;transform:scaleX(0.850);">Chtarg</span>
<span style="left:555.00px;top:102.06px;font:normal 9.3px/1 'Liberation Sans',sans-serif;color:#454545;transform:scaleX(0.908);">Target #</span>
<div style="left:540.40px;top:117.30px;width:40.50px;height:14.90px;background:#fbfbfb;box-shadow:inset 1.5px 1.2px 0 #666, inset -1px -1px 0 #eeeeee;"></div>
<span style="left:574.65px;top:121.57px;font:normal 6.5px/1 'Liberation Sans',sans-serif;color:#333;transform:scaleX(0.900);">5</span>
<div style="left:580.90px;top:117.30px;width:9.90px;height:7.45px;background:#c6c6c6;box-shadow:inset 1px 1px 0 #f4f4f4, inset -1px -1.2px 0 #4a4a4a;"></div>
<svg style="left:0;top:0" width="817" height="613"><polygon points="583.9,122.025 587.4999999999999,122.025 585.6999999999999,119.72500000000001" fill="#222"/></svg>
<div style="left:580.90px;top:124.75px;width:9.90px;height:7.45px;background:#c6c6c6;box-shadow:inset 1px 1px 0 #f4f4f4, inset -1px -1.2px 0 #4a4a4a;"></div>
<svg style="left:0;top:0" width="817" height="613"><polygon points="583.9,127.27499999999999 587.4999999999999,127.27499999999999 585.6999999999999,129.575" fill="#222"/></svg>
<span style="left:605.40px;top:102.06px;font:normal 9.3px/1 'Liberation Sans',sans-serif;color:#454545;transform:scaleX(0.928);">Curr.Target:</span>
<div style="left:596.50px;top:117.30px;width:61.10px;height:9.60px;background:#7f7f7f;"></div>
<span style="left:611.58px;top:118.79px;font:bold 7.6px/1 'Liberation Sans',sans-serif;color:#1c1c1c;transform:scaleX(0.950);">#5 Ag108</span>
<div style="left:668.50px;top:95.60px;width:137.00px;height:41.20px;box-shadow:inset 0 1px 0 #969696, inset 1px 0 0 #b0b0b0, inset -1.2px -1.2px 0 #e2e2e2;"></div>
<div style="left:669.50px;top:96.60px;width:137.00px;height:41.20px;box-shadow:inset 1px 1px 0 #d8d8d8;"></div>
<div style="left:671.50px;top:91.60px;width:47.95px;height:8.00px;background:#c6c6c6;"></div>
<span style="left:673.50px;top:92.24px;font:normal 7.5px/1 'Liberation Sans',sans-serif;color:#333;transform:scaleX(0.850);">Targets Legend</span>
<span style="left:678.58px;top:104.28px;font:normal 7.55px/1 'Liberation Mono',sans-serif;color:#2a2a2a;transform:scaleX(1.000);">#1 0x0&gt; C12</span>
<span style="left:676.52px;top:114.38px;font:normal 7.55px/1 'Liberation Mono',sans-serif;color:#2a2a2a;transform:scaleX(1.000);">#2 0x0&lt; Al27</span>
<span style="left:676.32px;top:124.28px;font:normal 7.55px/1 'Liberation Mono',sans-serif;color:#2a2a2a;transform:scaleX(1.000);">#3 0x1&gt; Cu64</span>
<span style="left:743.32px;top:104.28px;font:normal 7.55px/1 'Liberation Mono',sans-serif;color:#2a2a2a;transform:scaleX(1.000);">#4 0x3&gt; W183</span>
<span style="left:740.55px;top:114.38px;font:normal 7.55px/1 'Liberation Mono',sans-serif;color:#2a2a2a;transform:scaleX(1.000);">#5 0x3&lt; Ag108</span>
<span style="left:744.78px;top:124.28px;font:normal 7.55px/1 'Liberation Mono',sans-serif;color:#2a2a2a;transform:scaleX(1.000);">#6 0x2&gt; CH2</span>
<div style="left:470.00px;top:141.20px;width:288.80px;height:26.20px;box-shadow:inset 0 1px 0 #969696, inset 1px 0 0 #b0b0b0, inset -1.2px -1.2px 0 #e2e2e2;"></div>
<div style="left:471.00px;top:142.20px;width:288.80px;height:26.20px;box-shadow:inset 1px 1px 0 #d8d8d8;"></div>
<div style="left:479.40px;top:147.00px;width:50.60px;height:16.00px;background:#c6c6c6;box-shadow:inset 1px 1.3px 0 #f8f8f8, inset -1.2px -1.5px 0 #303030;"></div>
<span style="left:495.28px;top:149.96px;font:normal 9.5px/1 'Liberation Sans',sans-serif;color:#303030;transform:scaleX(0.850);">Settrj</span>
<div style="left:539.70px;top:147.00px;width:51.10px;height:16.00px;background:#c6c6c6;box-shadow:inset 1px 1.3px 0 #f8f8f8, inset -1.2px -1.5px 0 #303030;"></div>
<span style="left:555.38px;top:149.96px;font:normal 9.5px/1 'Liberation Sans',sans-serif;color:#303030;transform:scaleX(0.850);">Gettrj</span>
<div style="left:597.00px;top:148.40px;width:151.90px;height:13.20px;background:#fbfbfb;box-shadow:inset 1.5px 1.2px 0 #666, inset -1px -1px 0 #eeeeee;"></div>
<span style="left:598.60px;top:151.96px;font:normal 7.6px/1 'Liberation Mono',sans-serif;color:#333;transform:scaleX(1.000);">/scratch/qdpb/trj/itGUI.out</span>
<div style="left:470.00px;top:171.80px;width:253.00px;height:46.40px;box-shadow:inset 0 1px 0 #969696, inset 1px 0 0 #b0b0b0, inset -1.2px -1.2px 0 #e2e2e2;"></div>
<div style="left:471.00px;top:172.80px;width:253.00px;height:46.40px;box-shadow:inset 1px 1px 0 #d8d8d8;"></div>
<div style="left:479.40px;top:178.70px;width:50.60px;height:15.00px;background:#7e7e7e;box-shadow:inset 1px 0 0 #d8d8d8, inset 0 1px 0 #5c5c5c, inset -1.2px -1.8px 0 #303030;"></div>
<span style="left:492.32px;top:182.99px;font:normal 7.6000000000000005px/1 'Liberation Sans',sans-serif;color:#c9c9c9;transform:scaleX(0.850);">Targon</span>
<div style="left:479.40px;top:198.50px;width:50.60px;height:15.00px;background:#c6c6c6;box-shadow:inset 1px 1.3px 0 #f8f8f8, inset -1.2px -1.5px 0 #303030;"></div>
<span style="left:492.51px;top:202.79px;font:normal 7.6000000000000005px/1 'Liberation Sans',sans-serif;color:#8a8a8a;transform:scaleX(0.850);">Cycles</span>
<span style="left:543.70px;top:179.46px;font:normal 9.3px/1 'Liberation Sans',sans-serif;color:#454545;transform:scaleX(0.871);">Cycles number</span>
<div style="left:540.40px;top:193.50px;width:40.50px;height:14.90px;background:#fbfbfb;box-shadow:inset 1.5px 1.2px 0 #666, inset -1px -1px 0 #eeeeee;"></div>
<span style="left:564.89px;top:197.77px;font:normal 6.5px/1 'Liberation Sans',sans-serif;color:#333;transform:scaleX(0.900);">3600</span>
<div style="left:580.90px;top:193.50px;width:9.90px;height:7.45px;background:#c6c6c6;box-shadow:inset 1px 1px 0 #f4f4f4, inset -1px -1.2px 0 #4a4a4a;"></div>
<svg style="left:0;top:0" width="817" height="613"><polygon points="583.9,198.225 587.4999999999999,198.225 585.6999999999999,195.92499999999998" fill="#222"/></svg>
<div style="left:580.90px;top:200.95px;width:9.90px;height:7.45px;background:#c6c6c6;box-shadow:inset 1px 1px 0 #f4f4f4, inset -1px -1.2px 0 #4a4a4a;"></div>
<svg style="left:0;top:0" width="817" height="613"><polygon points="583.9,203.47500000000002 587.4999999999999,203.47500000000002 585.6999999999999,205.775" fill="#222"/></svg>
<span style="left:604.70px;top:179.46px;font:normal 9.3px/1 'Liberation Sans',sans-serif;color:#454545;transform:scaleX(0.906);">Drop each Nth</span>
<div style="left:602.00px;top:193.50px;width:40.20px;height:14.90px;background:#fbfbfb;box-shadow:inset 1.5px 1.2px 0 #666, inset -1px -1px 0 #eeeeee;"></div>
<span style="left:635.95px;top:197.77px;font:normal 6.5px/1 'Liberation Sans',sans-serif;color:#333;transform:scaleX(0.900);">0</span>
<div style="left:642.20px;top:193.50px;width:9.90px;height:7.45px;background:#c6c6c6;box-shadow:inset 1px 1px 0 #f4f4f4, inset -1px -1.2px 0 #4a4a4a;"></div>
<svg style="left:0;top:0" width="817" height="613"><polygon points="645.2,198.225 648.8,198.225 647.0,195.92499999999998" fill="#222"/></svg>
<div style="left:642.20px;top:200.95px;width:9.90px;height:7.45px;background:#c6c6c6;box-shadow:inset 1px 1px 0 #f4f4f4, inset -1px -1.2px 0 #4a4a4a;"></div>
<svg style="left:0;top:0" width="817" height="613"><polygon points="645.2,203.47500000000002 648.8,203.47500000000002 647.0,205.775" fill="#222"/></svg>
<div style="left:662.30px;top:178.40px;width:51.40px;height:15.30px;background:#c6c6c6;box-shadow:inset 1px 1.3px 0 #f8f8f8, inset -1.2px -1.5px 0 #303030;"></div>
<span style="left:675.73px;top:181.01px;font:normal 9.5px/1 'Liberation Sans',sans-serif;color:#303030;transform:scaleX(0.850);">Targoff</span>
<div style="left:470.00px;top:222.80px;width:227.60px;height:46.50px;box-shadow:inset 0 1px 0 #969696, inset 1px 0 0 #b0b0b0, inset -1.2px -1.2px 0 #e2e2e2;"></div>
<div style="left:471.00px;top:223.80px;width:227.60px;height:46.50px;box-shadow:inset 1px 1px 0 #d8d8d8;"></div>
<div style="left:479.40px;top:229.30px;width:50.60px;height:15.10px;background:#c6c6c6;box-shadow:inset 1px 1.3px 0 #f8f8f8, inset -1.2px -1.5px 0 #303030;"></div>
<span style="left:491.97px;top:233.64px;font:normal 7.6000000000000005px/1 'Liberation Sans',sans-serif;color:#8a8a8a;transform:scaleX(0.850);">Rdbktrj</span>
<div style="left:534.90px;top:230.00px;width:152.80px;height:13.50px;background:#fbfbfb;box-shadow:inset 1.5px 1.2px 0 #666, inset -1px -1px 0 #eeeeee;"></div>
<span style="left:536.50px;top:233.71px;font:normal 7.6px/1 'Liberation Mono',sans-serif;color:#333;transform:scaleX(1.000);">/scratch/qdpb/trj/qqq.trj</span>
<div style="left:479.40px;top:251.20px;width:152.00px;height:13.00px;background:#fbfbfb;box-shadow:inset 1.5px 1.2px 0 #666, inset -1px -1px 0 #eeeeee;"></div>
<span style="left:481.00px;top:254.66px;font:normal 7.6px/1 'Liberation Mono',sans-serif;color:#333;transform:scaleX(1.000);">/scratch/qdpb/trj/save.trj</span>
<div style="left:638.00px;top:250.50px;width:49.70px;height:15.30px;background:#c6c6c6;box-shadow:inset 1px 1.3px 0 #f8f8f8, inset -1.2px -1.5px 0 #303030;"></div>
<span style="left:650.28px;top:253.11px;font:normal 9.5px/1 'Liberation Sans',sans-serif;color:#303030;transform:scaleX(0.850);">Savetrj</span>
<div style="left:470.00px;top:274.70px;width:131.00px;height:25.10px;box-shadow:inset 0 1px 0 #969696, inset 1px 0 0 #b0b0b0, inset -1.2px -1.2px 0 #e2e2e2;"></div>
<div style="left:471.00px;top:275.70px;width:131.00px;height:25.10px;box-shadow:inset 1px 1px 0 #d8d8d8;"></div>
<div style="left:479.40px;top:280.20px;width:50.60px;height:15.50px;background:#c6c6c6;box-shadow:inset 1px 1.3px 0 #f8f8f8, inset -1.2px -1.5px 0 #303030;"></div>
<span style="left:499.31px;top:282.91px;font:normal 9.5px/1 'Liberation Sans',sans-serif;color:#303030;transform:scaleX(0.850);">Init</span>
<div style="left:539.70px;top:280.20px;width:51.10px;height:15.50px;background:#c6c6c6;box-shadow:inset 1px 1.3px 0 #f8f8f8, inset -1.2px -1.5px 0 #303030;"></div>
<span style="left:554.48px;top:282.91px;font:normal 9.5px/1 'Liberation Sans',sans-serif;color:#303030;transform:scaleX(0.850);">Finish</span>
<div style="left:470.00px;top:304.50px;width:131.00px;height:26.10px;box-shadow:inset 0 1px 0 #969696, inset 1px 0 0 #b0b0b0, inset -1.2px -1.2px 0 #e2e2e2;"></div>
<div style="left:471.00px;top:305.50px;width:131.00px;height:26.10px;box-shadow:inset 1px 1px 0 #d8d8d8;"></div>
<div style="left:479.40px;top:311.50px;width:50.60px;height:15.00px;background:#7e7e7e;box-shadow:inset 1px 0 0 #d8d8d8, inset 0 1px 0 #5c5c5c, inset -1.2px -1.8px 0 #303030;"></div>
<span style="left:492.14px;top:315.79px;font:normal 7.6000000000000005px/1 'Liberation Sans',sans-serif;color:#c9c9c9;transform:scaleX(0.850);">LoadTI</span>
<div style="left:539.70px;top:311.50px;width:51.10px;height:15.00px;background:#c6c6c6;box-shadow:inset 1px 1.3px 0 #f8f8f8, inset -1.2px -1.5px 0 #303030;"></div>
<span style="left:548.87px;top:313.96px;font:normal 9.5px/1 'Liberation Sans',sans-serif;color:#303030;transform:scaleX(0.850);">UnloadTI</span>
<div style="left:470.00px;top:335.40px;width:283.70px;height:46.30px;box-shadow:inset 0 1px 0 #969696, inset 1px 0 0 #b0b0b0, inset -1.2px -1.2px 0 #e2e2e2;"></div>
<div style="left:471.00px;top:336.40px;width:283.70px;height:46.30px;box-shadow:inset 1px 1px 0 #d8d8d8;"></div>
<div style="left:479.40px;top:342.20px;width:50.60px;height:14.80px;background:#7e7e7e;box-shadow:inset 1px 0 0 #d8d8d8, inset 0 1px 0 #5c5c5c, inset -1.2px -1.8px 0 #303030;"></div>
<span style="left:491.97px;top:346.39px;font:normal 7.6000000000000005px/1 'Liberation Sans',sans-serif;color:#c9c9c9;transform:scaleX(0.850);">LoadW</span>
<div style="left:534.90px;top:342.60px;width:152.80px;height:13.20px;background:#fbfbfb;box-shadow:inset 1.5px 1.2px 0 #666, inset -1px -1px 0 #eeeeee;"></div>
<span style="left:536.50px;top:346.16px;font:normal 7.6px/1 'Liberation Mono',sans-serif;color:#333;transform:scaleX(1.000);">11_12_15_run008</span>
<div style="left:693.80px;top:341.50px;width:50.70px;height:15.30px;background:#c6c6c6;box-shadow:inset 1px 1.3px 0 #f8f8f8, inset -1.2px -1.5px 0 #303030;"></div>
<span style="left:702.54px;top:344.11px;font:normal 9.5px/1 'Liberation Sans',sans-serif;color:#303030;transform:scaleX(0.850);">UnloadW</span>
<span style="left:484.70px;top:363.19px;font:normal 7.6px/1 'Liberation Sans',sans-serif;color:#454545;transform:scaleX(0.836);">Max. Size (bytes)</span>
<div style="left:540.40px;top:362.40px;width:40.50px;height:14.90px;background:#fbfbfb;box-shadow:inset 1.5px 1.2px 0 #666, inset -1px -1px 0 #eeeeee;"></div>
<span style="left:558.38px;top:366.67px;font:normal 6.5px/1 'Liberation Sans',sans-serif;color:#333;transform:scaleX(0.900);">409600</span>
<div style="left:580.90px;top:362.40px;width:9.90px;height:7.45px;background:#c6c6c6;box-shadow:inset 1px 1px 0 #f4f4f4, inset -1px -1.2px 0 #4a4a4a;"></div>
<svg style="left:0;top:0" width="817" height="613"><polygon points="583.9,367.125 587.4999999999999,367.125 585.6999999999999,364.825" fill="#222"/></svg>
<div style="left:580.90px;top:369.85px;width:9.90px;height:7.45px;background:#c6c6c6;box-shadow:inset 1px 1px 0 #f4f4f4, inset -1px -1.2px 0 #4a4a4a;"></div>
<svg style="left:0;top:0" width="817" height="613"><polygon points="583.9,372.37499999999994 587.4999999999999,372.37499999999994 585.6999999999999,374.67499999999995" fill="#222"/></svg>
<span style="left:597.70px;top:363.19px;font:normal 7.6px/1 'Liberation Sans',sans-serif;color:#454545;transform:scaleX(0.864);">Max. Age (seconds)</span>
<div style="left:662.30px;top:362.40px;width:40.50px;height:14.90px;background:#fbfbfb;box-shadow:inset 1.5px 1.2px 0 #666, inset -1px -1px 0 #eeeeee;"></div>
<span style="left:686.79px;top:366.67px;font:normal 6.5px/1 'Liberation Sans',sans-serif;color:#333;transform:scaleX(0.900);">3600</span>
<div style="left:702.80px;top:362.40px;width:9.90px;height:7.45px;background:#c6c6c6;box-shadow:inset 1px 1px 0 #f4f4f4, inset -1px -1.2px 0 #4a4a4a;"></div>
<svg style="left:0;top:0" width="817" height="613"><polygon points="705.8,367.125 709.3999999999999,367.125 707.5999999999999,364.825" fill="#222"/></svg>
<div style="left:702.80px;top:369.85px;width:9.90px;height:7.45px;background:#c6c6c6;box-shadow:inset 1px 1px 0 #f4f4f4, inset -1px -1.2px 0 #4a4a4a;"></div>
<svg style="left:0;top:0" width="817" height="613"><polygon points="705.8,372.37499999999994 709.3999999999999,372.37499999999994 707.5999999999999,374.67499999999995" fill="#222"/></svg>
<div style="left:470.00px;top:386.60px;width:340.30px;height:27.00px;box-shadow:inset 0 1px 0 #969696, inset 1px 0 0 #b0b0b0, inset -1.2px -1.2px 0 #e2e2e2;"></div>
<div style="left:471.00px;top:387.60px;width:340.30px;height:27.00px;box-shadow:inset 1px 1px 0 #d8d8d8;"></div>
<div style="left:472.60px;top:382.60px;width:57.85px;height:8.00px;background:#c6c6c6;"></div>
<span style="left:474.60px;top:383.24px;font:normal 7.5px/1 'Liberation Sans',sans-serif;color:#333;transform:scaleX(0.850);">Arbitrary command</span>
<div style="left:474.30px;top:393.70px;width:331.60px;height:13.30px;background:#fbfbfb;box-shadow:inset 1.5px 1.2px 0 #666, inset -1px -1px 0 #eeeeee;"></div>
<div style="left:474.30px;top:415.60px;width:331.30px;height:103.10px;background:#fbfbfb;box-shadow:inset 1.2px 1.3px 0 #4a4a4a, inset -1px -1px 0 #eee;"></div>
<span style="left:476.00px;top:417.99px;font:normal 7.4px/1 'Liberation Sans',sans-serif;color:#2a2a2a;transform:scaleX(0.891);">4325-th BoB arrived Thu Dec 15 21:17:56 2011</span>
<div style="left:614.80px;top:418.80px;width:3.20px;height:5.70px;background:#fbfbfb;border:0.5px solid #9a9a9a;box-sizing:border-box;"></div>
<span style="left:476.00px;top:425.70px;font:normal 7.4px/1 'Liberation Sans',sans-serif;color:#2a2a2a;transform:scaleX(0.891);">4325-th FQ EoB arrived Thu Dec 15 21:18:00 2011</span>
<div style="left:625.80px;top:426.51px;width:3.20px;height:5.70px;background:#fbfbfb;border:0.5px solid #9a9a9a;box-sizing:border-box;"></div>
<span style="left:476.00px;top:433.41px;font:normal 7.4px/1 'Liberation Sans',sans-serif;color:#2a2a2a;transform:scaleX(0.891);">4326-th BoB arrived Thu Dec 15 21:18:03 2011</span>
<div style="left:614.80px;top:434.22px;width:3.20px;height:5.70px;background:#fbfbfb;border:0.5px solid #9a9a9a;box-sizing:border-box;"></div>
<span style="left:476.00px;top:441.12px;font:normal 7.4px/1 'Liberation Sans',sans-serif;color:#2a2a2a;transform:scaleX(0.891);">4326-th FQ EoB arrived Thu Dec 15 21:18:07 2011</span>
<div style="left:625.80px;top:441.93px;width:3.20px;height:5.70px;background:#fbfbfb;border:0.5px solid #9a9a9a;box-sizing:border-box;"></div>
<span style="left:476.00px;top:448.83px;font:normal 7.4px/1 'Liberation Sans',sans-serif;color:#2a2a2a;transform:scaleX(0.891);">4327-th BoB arrived Thu Dec 15 21:18:10 2011</span>
<div style="left:614.80px;top:449.64px;width:3.20px;height:5.70px;background:#fbfbfb;border:0.5px solid #9a9a9a;box-sizing:border-box;"></div>
<span style="left:476.00px;top:456.54px;font:normal 7.4px/1 'Liberation Sans',sans-serif;color:#2a2a2a;transform:scaleX(0.891);">4327-th FQ EoB arrived Thu Dec 15 21:18:14 2011</span>
<div style="left:625.80px;top:457.35px;width:3.20px;height:5.70px;background:#fbfbfb;border:0.5px solid #9a9a9a;box-sizing:border-box;"></div>
<span style="left:476.00px;top:464.25px;font:normal 7.4px/1 'Liberation Sans',sans-serif;color:#2a2a2a;transform:scaleX(0.891);">4328-th BoB arrived Thu Dec 15 21:18:17 2011</span>
<div style="left:614.80px;top:465.06px;width:3.20px;height:5.70px;background:#fbfbfb;border:0.5px solid #9a9a9a;box-sizing:border-box;"></div>
<span style="left:476.00px;top:471.96px;font:normal 7.4px/1 'Liberation Sans',sans-serif;color:#2a2a2a;transform:scaleX(0.891);">4328-th FQ EoB arrived Thu Dec 15 21:18:21 2011</span>
<div style="left:625.80px;top:472.77px;width:3.20px;height:5.70px;background:#fbfbfb;border:0.5px solid #9a9a9a;box-sizing:border-box;"></div>
<span style="left:476.00px;top:479.67px;font:normal 7.4px/1 'Liberation Sans',sans-serif;color:#2a2a2a;transform:scaleX(0.891);">4329-th BoB arrived Thu Dec 15 21:18:24 2011</span>
<div style="left:614.80px;top:480.48px;width:3.20px;height:5.70px;background:#fbfbfb;border:0.5px solid #9a9a9a;box-sizing:border-box;"></div>
<span style="left:476.00px;top:487.38px;font:normal 7.4px/1 'Liberation Sans',sans-serif;color:#2a2a2a;transform:scaleX(0.891);">4329-th FQ EoB arrived Thu Dec 15 21:18:28 2011</span>
<div style="left:625.80px;top:488.19px;width:3.20px;height:5.70px;background:#fbfbfb;border:0.5px solid #9a9a9a;box-sizing:border-box;"></div>
<span style="left:476.00px;top:495.09px;font:normal 7.4px/1 'Liberation Sans',sans-serif;color:#2a2a2a;transform:scaleX(0.891);">4330-th BoB arrived Thu Dec 15 21:18:31 2011</span>
<div style="left:614.80px;top:495.90px;width:3.20px;height:5.70px;background:#fbfbfb;border:0.5px solid #9a9a9a;box-sizing:border-box;"></div>
<span style="left:476.00px;top:502.80px;font:normal 7.4px/1 'Liberation Sans',sans-serif;color:#2a2a2a;transform:scaleX(0.891);">4330-th FQ EoB arrived Thu Dec 15 21:18:35 2011</span>
<div style="left:625.80px;top:503.61px;width:3.20px;height:5.70px;background:#fbfbfb;border:0.5px solid #9a9a9a;box-sizing:border-box;"></div>
<div style="left:796.00px;top:416.50px;width:9.00px;height:93.50px;background:#dcdcdc;background-image:radial-gradient(#bdbdbd 0.5px, transparent 0.6px);background-size:2px 2px;"></div>
<div style="left:796.00px;top:416.80px;width:9.00px;height:8.00px;background:#c6c6c6;box-shadow:inset 1px 1px 0 #f4f4f4, inset -1px -1px 0 #555;"></div>
<div style="left:796.00px;top:493.00px;width:9.00px;height:9.00px;background:#c6c6c6;box-shadow:inset 1px 1px 0 #f4f4f4, inset -1px -1px 0 #555;"></div>
<div style="left:796.00px;top:502.00px;width:9.00px;height:8.00px;background:#c6c6c6;box-shadow:inset 1px 1px 0 #f4f4f4, inset -1px -1px 0 #555;"></div>
<div style="left:475.30px;top:511.20px;width:320.70px;height:7.00px;background:#dcdcdc;background-image:radial-gradient(#bdbdbd 0.5px, transparent 0.6px);background-size:2px 2px;"></div>
<div style="left:475.30px;top:511.20px;width:7.20px;height:7.00px;background:#c6c6c6;box-shadow:inset 1px 1px 0 #f4f4f4, inset -1px -1px 0 #555;"></div>
<div style="left:482.50px;top:511.20px;width:182.00px;height:7.00px;background:#c6c6c6;box-shadow:inset 1px 1px 0 #f4f4f4, inset -1px -1px 0 #555;"></div>
<div style="left:789.00px;top:511.20px;width:7.00px;height:7.00px;background:#c6c6c6;box-shadow:inset 1px 1px 0 #f4f4f4, inset -1px -1px 0 #555;"></div>
<div style="left:796.00px;top:510.00px;width:9.00px;height:8.20px;background:#c6c6c6;"></div>
<svg style="left:0;top:0" width="817" height="613"><polygon points="798.2,422 802.8,422 800.5,419" fill="#222"/><polygon points="798.2,504.6 802.8,504.6 800.5,507.6" fill="#222"/><polygon points="480,512.8 480,516.8 477.4,514.8" fill="#222"/><polygon points="791.4,512.8 791.4,516.8 794,514.8" fill="#222"/></svg>
<div style="left:40.00px;top:577.70px;width:36.00px;height:42.30px;background:#808080;"></div>
<svg style="left:0;top:0" width="817" height="613"><g transform="translate(57.9,591.3)"><polygon points="0,-10.5 10.5,0 0,10.5 -10.5,0" fill="#b9b9b9"/><polygon points="0,-7.6 7.6,0 0,7.6 -7.6,0" fill="#a2a2a2"/><polygon points="-6.5,1 -1,6.5 2.5,3 -3,-2.5" fill="#8a8a8a"/><path d="M-10.5,0 L0,-10.5 L10.5,0" stroke="#2a2a2a" stroke-width="0.8" fill="none"/><path d="M-10.5,0 L0,10.5" stroke="#3a3a3a" stroke-width="0.8" fill="none"/><path d="M0,10.5 L10.5,0" stroke="#f2f2f2" stroke-width="1.3" stroke-dasharray="1 0.8" fill="none"/><path d="M-7.6,0 L0,-7.6 L7.6,0 L0,7.6 Z" stroke="#e6e6e6" stroke-width="0.9" stroke-dasharray="1.2 0.8" fill="none"/><path d="M-4.5,-1.5 C-3,-5 1,-5 1.5,-2 M0.5,-4.5 L4.5,0.5 M-1,0.5 L3,4" stroke="#efefef" stroke-width="1" fill="none"/></g></svg>
<span style="left:48.80px;top:605.87px;font:normal 6.2px/1 'Liberation Sans',sans-serif;color:#111;transform:scaleX(1.161);">xterm</span>
</div></div></div>
</body></html>
